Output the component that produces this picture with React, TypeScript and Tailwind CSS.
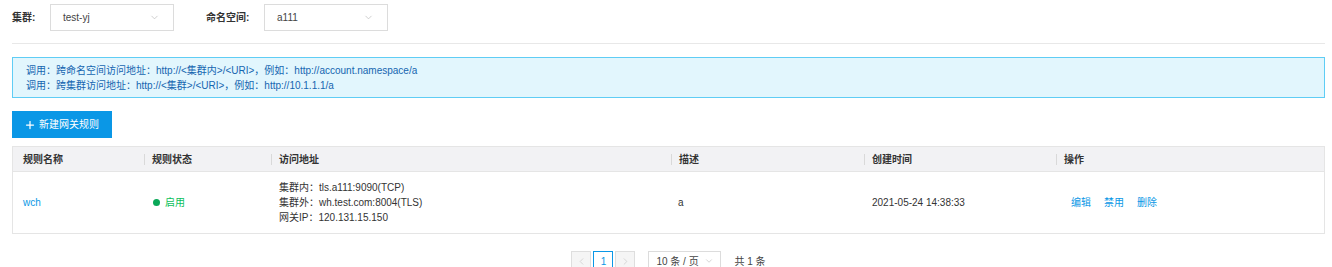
import { ChevronDown, ChevronLeft, ChevronRight, Plus } from "lucide-react";

const FONT = "font-['Liberation_Sans','Noto_Sans_CJK_SC',sans-serif]";

const COLUMNS = [
  { label: "规则名称", width: "w-[129px]", first: true },
  { label: "规则状态", width: "w-[127px]" },
  { label: "访问地址", width: "w-[400px]" },
  { label: "描述", width: "w-[193px]" },
  { label: "创建时间", width: "w-[192px]" },
  { label: "操作", width: "flex-1" },
];

function Select({ value, width }: { value: string; width: string }) {
  return (
    <div
      className={`${width} h-[27px] border border-[#dcdcdc] bg-white flex items-center justify-between pl-[12px] pr-[13px] text-[#444]`}
    >
      <span>{value}</span>
      <ChevronDown className="w-[11px] h-[11px] text-[#bbb]" strokeWidth={1.5} />
    </div>
  );
}

export default function App() {
  return (
    <div className={`${FONT} w-[1332px] bg-white pl-[12px] pr-[7px] text-[10px] text-[#333] whitespace-nowrap`}>
      {/* filters */}
      <div className="flex items-center pt-[4px] pb-[12px] border-b border-[#e8e8e8]">
        <span className="font-bold text-[#333] w-[38px]">集群:</span>
        <Select value="test-yj" width="w-[124px]" />
        <span className="font-bold text-[#333] ml-[32px] w-[58px]">命名空间:</span>
        <Select value="a111" width="w-[124px]" />
      </div>

      {/* notice */}
      <div className="mt-[13px] h-[41px] border border-[#5fcdf5] bg-[#e2f6fd] pl-[13px] flex flex-col justify-center leading-[15px] text-[#1565b0]">
        <div>调用：跨命名空间访问地址：http://&lt;集群内&gt;/&lt;URI&gt;，例如：http://account.namespace/a</div>
        <div>调用：跨集群访问地址：http://&lt;集群&gt;/&lt;URI&gt;，例如：http://10.1.1.1/a</div>
      </div>

      {/* create button */}
      <button className="mt-[13px] w-[100px] h-[27px] bg-[#0a97e6] text-white text-[10px] flex items-center pl-[12px] gap-[3px]">
        <Plus className="w-[12px] h-[12px]" strokeWidth={2.5} />
        新建网关规则
      </button>

      {/* table */}
      <div className="mt-[8px] border border-[#e5e5e5]">
        <div className="flex h-[24px] bg-[#f2f2f4] items-center font-bold text-[#333]">
          {COLUMNS.map((c) => (
            <div key={c.label} className={`${c.width} flex items-center`}>
              {c.first ? (
                <span className="pl-[10px]">{c.label}</span>
              ) : (
                <>
                  <span className="ml-[2px] w-px h-[11px] bg-[#d9d9d9]" />
                  <span className="pl-[7px]">{c.label}</span>
                </>
              )}
            </div>
          ))}
        </div>
        <div className="flex h-[62px] items-center border-t border-[#e5e5e5]">
          <div className="w-[129px] pl-[10px] text-[#0a97e6]">wch</div>
          <div className="w-[127px] pl-[11px] flex items-center gap-[5px] text-[#0abf5b]">
            <span className="w-[7px] h-[7px] rounded-full bg-[#0aa858]" />
            启用
          </div>
          <div className="w-[400px] pl-[10px] leading-[15px] text-[#333]">
            <div>集群内：tls.a111:9090(TCP)</div>
            <div>集群外：wh.test.com:8004(TLS)</div>
            <div>网关IP：120.131.15.150</div>
          </div>
          <div className="w-[193px] pl-[9px]">a</div>
          <div className="w-[192px] pl-[10px]">2021-05-24 14:38:33</div>
          <div className="flex-1 pl-[17px] flex gap-[13px] text-[#0a97e6]">
            <span>编辑</span>
            <span>禁用</span>
            <span>删除</span>
          </div>
        </div>
      </div>

      {/* pagination */}
      <div className="mt-[17px] flex justify-center items-center pb-[8px]">
        <div className="flex items-center gap-[2px]">
          <div className="w-[20px] h-[20px] border border-[#dedede] bg-[#f5f5f5] flex items-center justify-center">
            <ChevronLeft className="w-[11px] h-[11px] text-[#c8c8c8]" strokeWidth={1.5} />
          </div>
          <div className="w-[20px] h-[20px] border border-[#0a97e6] flex items-center justify-center text-[#0a97e6]">
            1
          </div>
          <div className="w-[20px] h-[20px] border border-[#dedede] bg-[#f5f5f5] flex items-center justify-center">
            <ChevronRight className="w-[11px] h-[11px] text-[#c8c8c8]" strokeWidth={1.5} />
          </div>
        </div>
        <div className="ml-[13px] w-[73px] h-[20px] border border-[#dcdcdc] flex items-center justify-between pl-[7px] pr-[6px] text-[#444]">
          <span>10 条 / 页</span>
          <ChevronDown className="w-[10px] h-[10px] text-[#bbb]" strokeWidth={1.5} />
        </div>
        <span className="ml-[13px] text-[#444]">共 1 条</span>
      </div>
    </div>
  );
}
